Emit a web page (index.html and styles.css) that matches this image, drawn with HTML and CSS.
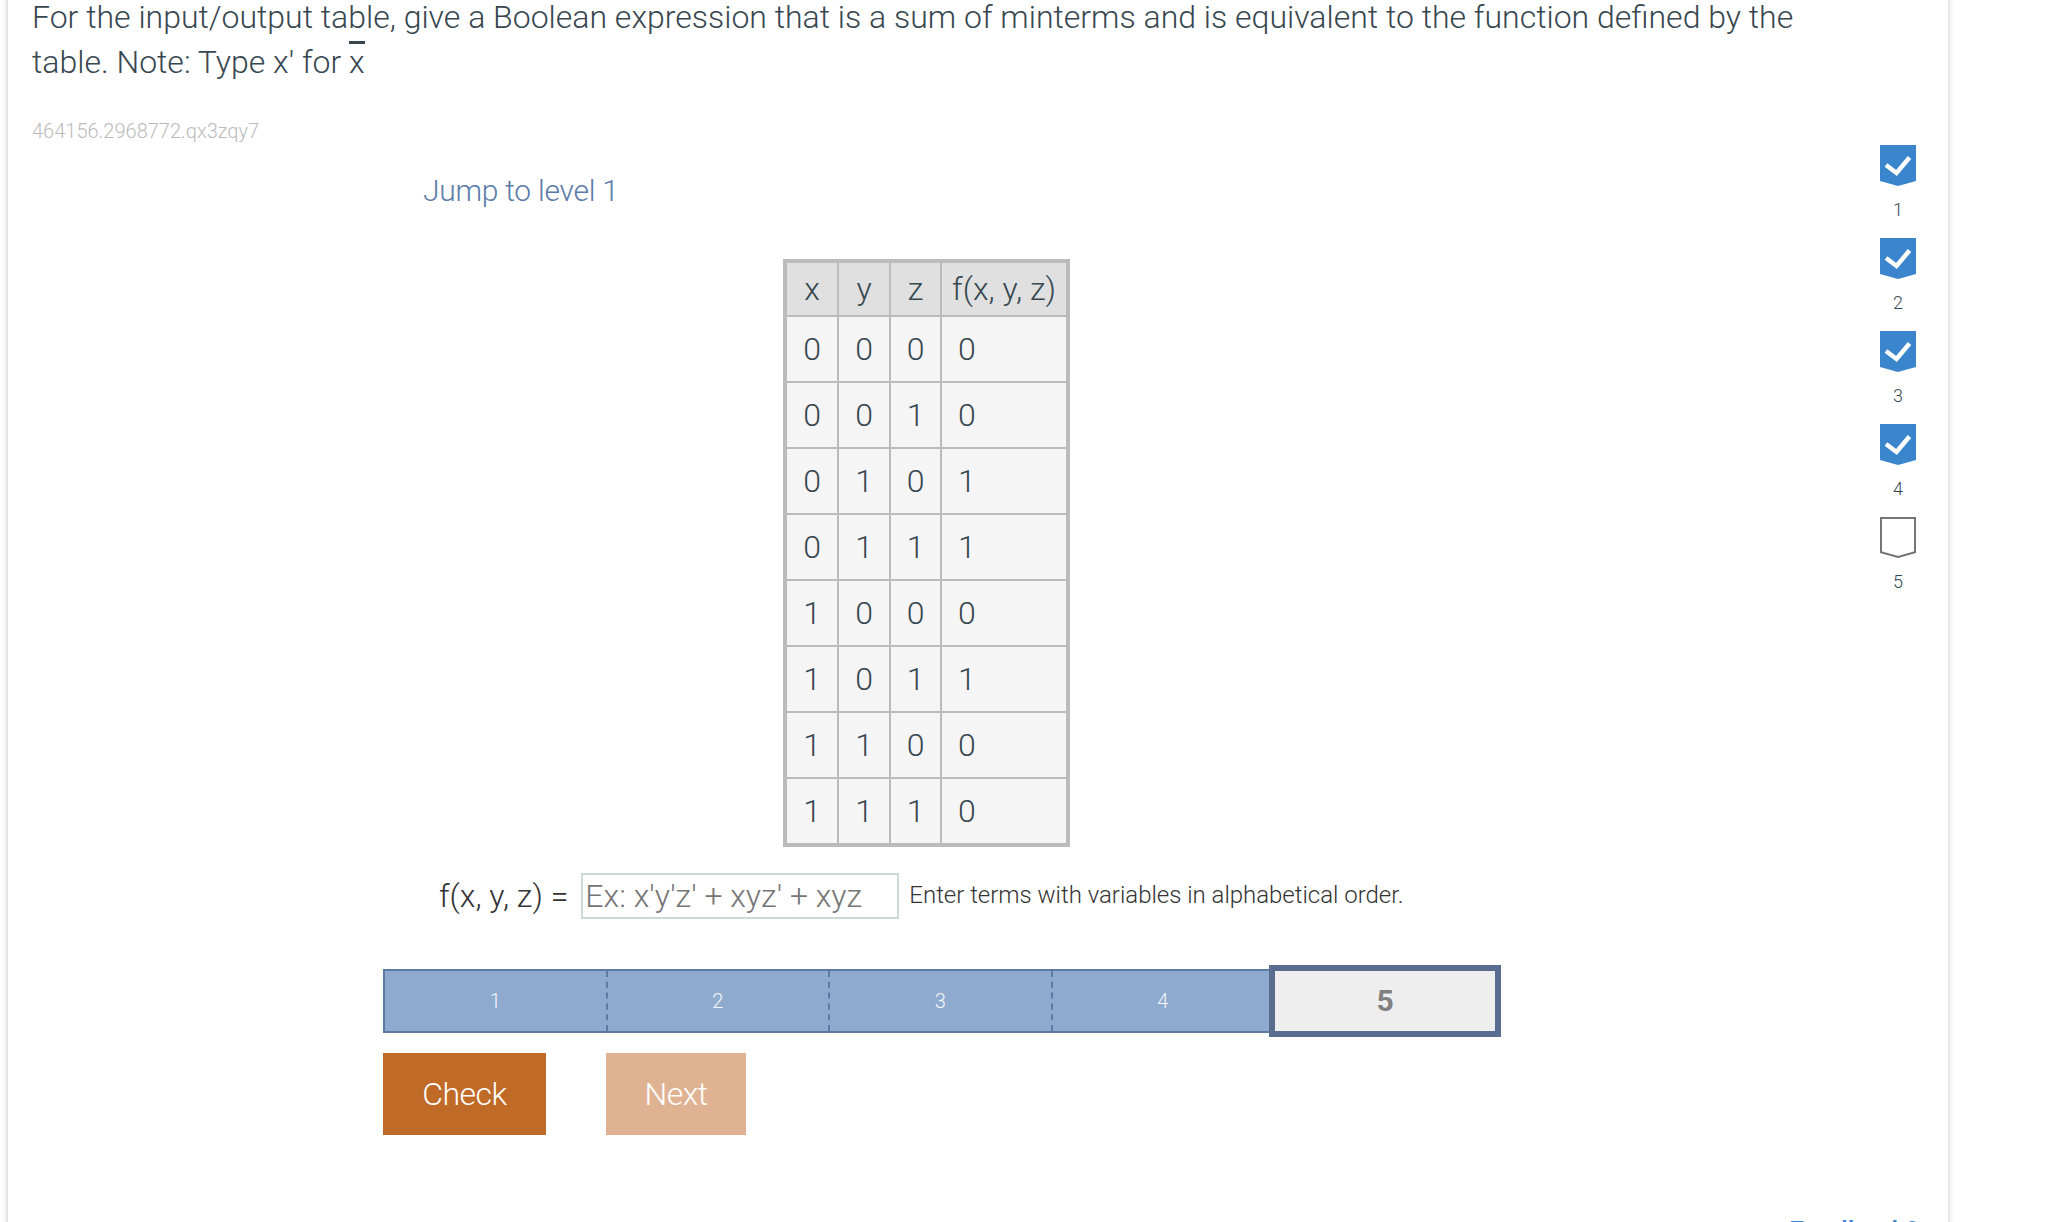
FILE: index.html
```html
<!DOCTYPE html>
<html lang="en">
<head>
  <meta charset="UTF-8" />
  <title>Sum of minterms</title>
  <link rel="stylesheet" href="styles.css">
</head>
<body>
  <div class="card">
    <p class="question">For the input/output table, give a Boolean expression that is a sum of minterms and is equivalent to the function defined by the table. Note: Type x' for <span class="overline">x</span></p>
    <div class="activity-id">464156.2968772.qx3zqy7</div>

    <div class="activity">
      <div class="jump">Jump to level 1</div>

      <table class="truth-table">
        <thead>
          <tr><th>x</th><th>y</th><th>z</th><th>f(x, y, z)</th></tr>
        </thead>
        <tbody>
          <tr><td>0</td><td>0</td><td>0</td><td>0</td></tr>
          <tr><td>0</td><td>0</td><td>1</td><td>0</td></tr>
          <tr><td>0</td><td>1</td><td>0</td><td>1</td></tr>
          <tr><td>0</td><td>1</td><td>1</td><td>1</td></tr>
          <tr><td>1</td><td>0</td><td>0</td><td>0</td></tr>
          <tr><td>1</td><td>0</td><td>1</td><td>1</td></tr>
          <tr><td>1</td><td>1</td><td>0</td><td>0</td></tr>
          <tr><td>1</td><td>1</td><td>1</td><td>0</td></tr>
        </tbody>
      </table>

      <div class="answer">
        <label class="answer-label" for="answer">f(x, y, z) =</label>
        <input class="answer-input" id="answer" type="text" placeholder="Ex: x'y'z' + xyz' + xyz" />
        <span class="answer-hint">Enter terms with variables in alphabetical order.</span>
      </div>

      <div class="levels">
        <div class="level">1</div>
        <div class="level">2</div>
        <div class="level">3</div>
        <div class="level">4</div>
        <div class="level active">5</div>
      </div>

      <div class="actions">
        <button class="btn check">Check</button>
        <button class="btn next">Next</button>
      </div>
    </div>

    <div class="progress">
      <div class="step">
        <svg class="chevron" viewBox="0 0 36 41"><path class="done" d="M0 0H36V36L18 41L0 36Z"/><path class="tick" d="M6 20L16.5 28L29.5 12.5"/></svg>
        <span>1</span>
      </div>
      <div class="step">
        <svg class="chevron" viewBox="0 0 36 41"><path class="done" d="M0 0H36V36L18 41L0 36Z"/><path class="tick" d="M6 20L16.5 28L29.5 12.5"/></svg>
        <span>2</span>
      </div>
      <div class="step">
        <svg class="chevron" viewBox="0 0 36 41"><path class="done" d="M0 0H36V36L18 41L0 36Z"/><path class="tick" d="M6 20L16.5 28L29.5 12.5"/></svg>
        <span>3</span>
      </div>
      <div class="step">
        <svg class="chevron" viewBox="0 0 36 41"><path class="done" d="M0 0H36V36L18 41L0 36Z"/><path class="tick" d="M6 20L16.5 28L29.5 12.5"/></svg>
        <span>4</span>
      </div>
      <div class="step">
        <svg class="chevron" viewBox="0 0 36 41"><path class="todo" d="M1 1H35V35.3L18 40L1 35.3Z"/></svg>
        <span>5</span>
      </div>
    </div>

    <a class="feedback" href="#">Feedback?</a>
  </div>
</body>
</html>
```

FILE: styles.css
```css
html, body {
  height: 1222px;
  overflow: hidden;
}

body {
  margin: 0;
  background: #fff;
  color: #37474f;
  font-family: Roboto, sans-serif;
  font-weight: 300;
}

.card {
  position: relative;
  box-sizing: border-box;
  width: 1940px;
  height: 1300px;
  margin: -24px 0 0 8px;
  padding: 19px 24px 0;
  background: #fff;
  box-shadow: 0 0 6px rgba(0, 0, 0, 0.25);
}

.question {
  width: 1800px;
  margin: 0;
  font-size: 32px;
  line-height: 45px;
}

.overline {
  display: inline-block;
  position: relative;
}

.overline::before {
  content: "";
  position: absolute;
  top: 1px;
  left: 0;
  right: 0;
  height: 3px;
  background: #37474f;
}

.activity-id {
  margin-top: 31px;
  color: #bbb;
  font-size: 20px;
  line-height: 30px;
}

.activity {
  margin-left: 351px;
}

.jump {
  margin: 22px 0 46px 40px;
  color: #5b7ba8;
  font-size: 30px;
  letter-spacing: -0.26px;
  line-height: 45px;
}

.truth-table {
  margin-left: 400px;
  border: 4px solid #bbb;
  border-spacing: 0;
  font-size: 32px;
  font-weight: 300;
}

.truth-table th,
.truth-table td {
  box-sizing: border-box;
  width: 52px;
  padding: 0 15px;
  border-right: 2px solid #bbb;
  border-bottom: 2px solid #bbb;
  font-weight: 300;
  text-align: center;
}

.truth-table th {
  height: 54px;
  padding: 0;
  background: #e0e0e0;
}

.truth-table td {
  height: 66px;
  background: #f5f5f5;
}

.truth-table th:nth-child(3),
.truth-table td:nth-child(3) {
  width: 51px;
}

.truth-table th:last-child,
.truth-table td:last-child {
  width: 124px;
  border-right: none;
}

.truth-table td:last-child {
  padding-left: 16px;
  text-align: left;
}

.truth-table tr:last-child td {
  height: 64px;
  border-bottom: none;
}

.answer {
  display: flex;
  align-items: center;
  margin: 26px 0 50px 56px;
  color: #333;
}

.answer-label {
  margin-right: 13px;
  font-size: 32px;
}

.answer-input {
  box-sizing: border-box;
  width: 318px;
  height: 46px;
  padding: 0 2px;
  border: 2px solid #cfd8dc;
  border-radius: 0;
  font-family: Roboto, sans-serif;
  font-size: 32px;
  font-weight: 300;
}

.answer-input::placeholder {
  color: #757575;
  opacity: 1;
}

.answer-hint {
  margin: 0 0 2px 10px;
  font-size: 24px;
  letter-spacing: -0.02px;
}

.levels {
  display: flex;
  width: 1114px;
  box-sizing: border-box;
  height: 64px;
  border: 2px solid #5b7ba3;
  background: #8eabcf;
  color: #f5f7fa;
  font-size: 20px;
}

.level {
  display: flex;
  flex: 0 0 222.5px;
  box-sizing: border-box;
  align-items: center;
  justify-content: center;
  border-right: 2px dashed #5b7ba3;
}

.level.active {
  flex: 1;
  padding-bottom: 2px;
  border-right: none;
  outline: 6px solid #5a6d8e;
  background: #eee;
  color: #808080;
  font-size: 30px;
  font-weight: 700;
}

.actions {
  display: flex;
  gap: 60px;
  margin-top: 20px;
}

.btn {
  height: 82px;
  border: none;
  color: #fff;
  font-family: Roboto, sans-serif;
  font-size: 32px;
  font-weight: 300;
  letter-spacing: -0.5px;
}

.check {
  width: 163px;
  background: #bf6a26;
}

.next {
  width: 140px;
  background: #dfb292;
}

.progress {
  position: absolute;
  top: 169px;
  left: 1872px;
  display: flex;
  flex-direction: column;
  align-items: center;
  gap: 15px;
  width: 36px;
  font-size: 18px;
}

.step {
  display: flex;
  flex-direction: column;
  align-items: center;
  gap: 11px;
  line-height: 26px;
}

.chevron {
  display: block;
  width: 36px;
  height: 41px;
}

.done {
  fill: #3a85cb;
}

.tick {
  fill: none;
  stroke: #fff;
  stroke-width: 4.5;
}

.todo {
  fill: #fff;
  stroke: #757575;
  stroke-width: 2;
}

.feedback {
  position: absolute;
  top: 1238px;
  left: 1781px;
  color: #3a85cb;
  font-size: 27px;
  font-weight: 500;
  line-height: 36px;
  text-decoration: none;
}
```
